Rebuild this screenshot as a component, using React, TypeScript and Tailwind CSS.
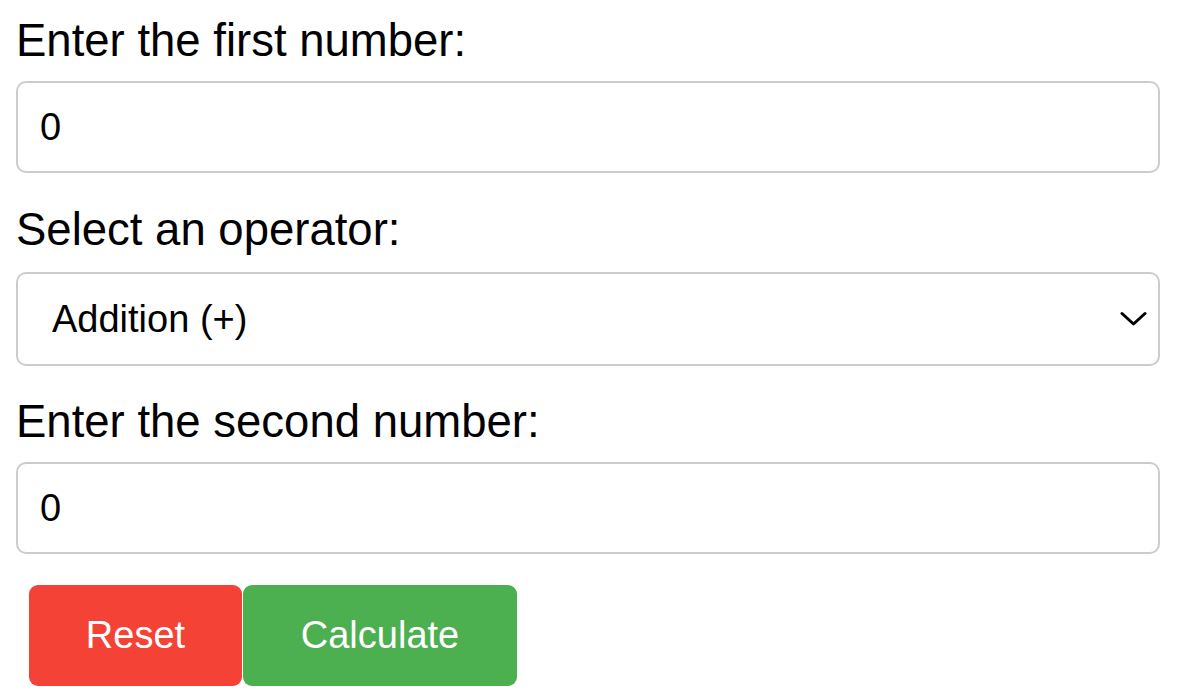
import React, { useState } from "react";

export default function App() {
  const [a, setA] = useState("0");
  const [b, setB] = useState("0");
  const [op, setOp] = useState("add");
  return (
    <div className="bg-white min-h-[700px] pl-[16px] pt-[14px] text-black font-['Liberation_Sans',Arial,sans-serif]">
      <label className="block text-[45.5px] leading-[53px]">Enter the first number:</label>
      <input
        type="number"
        value={a}
        onChange={(e) => setA(e.target.value)}
        className="block mt-[14px] w-[1144px] h-[92px] border-2 border-[#cccccc] rounded-[10px] pl-[22px] text-[38px] outline-none bg-white font-['Liberation_Sans',Arial,sans-serif]"
      />
      <label className="block mt-[30px] text-[45.5px] leading-[53px]">Select an operator:</label>
      <div className="relative mt-[16px] w-[1144px] h-[94px]">
        <select
          value={op}
          onChange={(e) => setOp(e.target.value)}
          className="appearance-none block w-full h-full border-2 border-[#cccccc] rounded-[10px] pl-[34px] text-[38px] bg-white outline-none font-['Liberation_Sans',Arial,sans-serif]"
        >
          <option value="add">Addition (+)</option>
          <option value="sub">Subtraction (-)</option>
          <option value="mul">Multiplication (*)</option>
          <option value="div">Division (/)</option>
        </select>
        <svg
          className="absolute pointer-events-none right-[13px] top-1/2 -translate-y-1/2"
          width="27"
          height="15"
          viewBox="0 0 27 15"
        >
          <polyline points="2,2 13.5,12.5 25,2" fill="none" stroke="#000" strokeWidth="3" strokeLinecap="round" strokeLinejoin="round" />
        </svg>
      </div>
      <label className="block mt-[29px] text-[45.5px] leading-[53px]">Enter the second number:</label>
      <input
        type="number"
        value={b}
        onChange={(e) => setB(e.target.value)}
        className="block mt-[14px] w-[1144px] h-[92px] border-2 border-[#cccccc] rounded-[10px] pl-[22px] text-[38px] outline-none bg-white font-['Liberation_Sans',Arial,sans-serif]"
      />
      <div className="flex mt-[31px] ml-[13px] gap-[1px]">
        <button
          className="w-[213px] h-[101px] bg-[#f44336] text-white text-[38px] rounded-[9px] font-['Liberation_Sans',Arial,sans-serif]"
          onClick={() => { setA("0"); setB("0"); setOp("add"); }}
        >
          Reset
        </button>
        <button className="w-[274px] h-[101px] bg-[#4caf50] text-white text-[38px] rounded-[9px] font-['Liberation_Sans',Arial,sans-serif]">
          Calculate
        </button>
      </div>
    </div>
  );
}
